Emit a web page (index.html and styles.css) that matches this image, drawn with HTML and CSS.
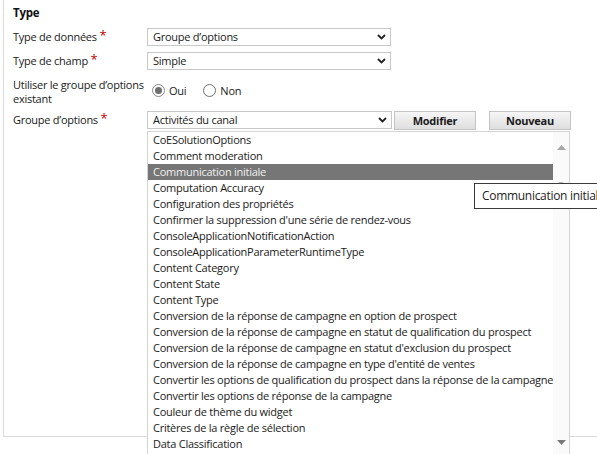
FILE: index.html
```html
<!DOCTYPE html>
<html lang="fr">
<head>
<meta charset="utf-8">
<title>Type</title>
<link rel="stylesheet" href="styles.css">
</head>
<body>
<div class="panel">
  <div class="title">Type</div>
  <div class="form">
    <div class="label">Type de données <span class="req">*</span></div>
    <div class="select"><span>Groupe d’options</span><svg class="chev" width="9" height="6" viewBox="0 0 9 6"><path d="M1 1 L4.5 4.5 L8 1" fill="none" stroke="#222" stroke-width="1.8"/></svg></div>

    <div class="label">Type de champ <span class="req">*</span></div>
    <div class="select"><span>Simple</span><svg class="chev" width="9" height="6" viewBox="0 0 9 6"><path d="M1 1 L4.5 4.5 L8 1" fill="none" stroke="#222" stroke-width="1.8"/></svg></div>

    <div class="label two">Utiliser le groupe d’options<br>existant</div>
    <div class="radios">
      <span class="radio on"><span class="dot"></span></span><span class="rlabel">Oui</span>
      <span class="radio"></span><span class="rlabel">Non</span>
    </div>

    <div class="label">Groupe d’options <span class="req">*</span></div>
    <div class="ctrlrow">
      <div class="select wide"><span>Activités du canal</span><svg class="chev" width="9" height="6" viewBox="0 0 9 6"><path d="M1 1 L4.5 4.5 L8 1" fill="none" stroke="#222" stroke-width="1.8"/></svg></div>
      <div class="btn">Modifier</div>
      <div class="btn">Nouveau</div>
    </div>

    <div></div>
    <div class="listbox">
      <ul class="items">
        <li>CoESolutionOptions</li>
        <li>Comment moderation</li>
        <li class="sel">Communication initiale</li>
        <li>Computation Accuracy</li>
        <li>Configuration des propriétés</li>
        <li>Confirmer la suppression d'une série de rendez-vous</li>
        <li>ConsoleApplicationNotificationAction</li>
        <li>ConsoleApplicationParameterRuntimeType</li>
        <li>Content Category</li>
        <li>Content State</li>
        <li>Content Type</li>
        <li>Conversion de la réponse de campagne en option de prospect</li>
        <li>Conversion de la réponse de campagne en statut de qualification du prospect</li>
        <li>Conversion de la réponse de campagne en statut d'exclusion du prospect</li>
        <li>Conversion de la réponse de campagne en type d'entité de ventes</li>
        <li>Convertir les options de qualification du prospect dans la réponse de la campagne</li>
        <li>Convertir les options de réponse de la campagne</li>
        <li>Couleur de thème du widget</li>
        <li>Critères de la règle de sélection</li>
        <li>Data Classification</li>
      </ul>
      <div class="scrollbar">
        <svg class="arrow" width="9" height="5" viewBox="0 0 9 5"><path d="M0 5 L4.5 0 L9 5 Z" fill="#a6a6a6"/></svg>
        <div class="thumbtop"></div>
        <svg class="arrow down" width="9" height="5" viewBox="0 0 9 5"><path d="M0 0 L4.5 5 L9 0 Z" fill="#7a7a7a"/></svg>
      </div>
    </div>
  </div>
</div>
<div class="tooltip">Communication initiale</div>
</body>
</html>
```
FILE: styles.css
```css
html, body {
  margin: 0;
  padding: 0;
  background: #ffffff;
  overflow: hidden;
  width: 597px;
  height: 454px;
}
body {
  font-family: "Open Sans", "Noto Sans", "Liberation Sans", sans-serif;
  font-size: 11px;
  letter-spacing: -0.25px;
  color: #1a1a1a;
  position: relative;
}
.panel {
  margin-left: 3px;
  width: 640px;
  height: 437px;
  border-left: 1px solid #dadada;
  border-bottom: 1px solid #dadada;
  box-sizing: border-box;
  padding-left: 9px;
}
.title {
  padding-top: 5px;
  height: 16px;
  line-height: 16px;
  font-weight: bold;
  font-size: 11.5px;
  color: #111;
}
.form {
  margin-top: 7px;
  display: grid;
  grid-template-columns: 134px 1fr;
  row-gap: 6px;
}
.label {
  line-height: 18px;
  height: 18px;
  white-space: nowrap;
}
.label.two {
  height: auto;
  line-height: 14px;
  padding-top: 2px;
  margin-bottom: -1px;
}
.req {
  color: #c00000;
  font-size: 13px;
  line-height: 0;
  position: relative;
  top: -1px;
}
.select {
  width: 244px;
  height: 18px;
  box-sizing: border-box;
  border: 1px solid #c8c8c8;
  display: flex;
  align-items: center;
  justify-content: space-between;
  padding: 0 4px 0 5px;
  line-height: 16px;
}
.select.wide {
  width: 245px;
}
.chev {
  display: block;
}
.radios {
  display: flex;
  align-items: center;
  height: 28px;
  padding-left: 5px;
  padding-top: 1px;
  box-sizing: border-box;
}
.radio {
  width: 13px;
  height: 13px;
  box-sizing: border-box;
  border: 1px solid #6f6f6f;
  border-radius: 50%;
  display: flex;
  align-items: center;
  justify-content: center;
  margin-right: 4px;
}
.radio.on {
  border-color: #8a8a8a;
}
.dot {
  width: 7px;
  height: 7px;
  border-radius: 50%;
  background: #6e6e6e;
}
.rlabel {
  margin-right: 17px;
}
.ctrlrow {
  display: flex;
  align-items: center;
  gap: 2px;
  height: 18px;
}
.btn {
  width: 82px;
  height: 19px;
  box-sizing: border-box;
  border: 1px solid #c4c4c4;
  background: linear-gradient(#f6f6f6, #dedede);
  font-weight: bold;
  text-align: center;
  line-height: 17px;
  color: #1a1a1a;
}
.btn + .btn {
  margin-left: 11px;
}
.listbox {
  margin-top: -4px;
  width: 423px;
  height: 340px;
  box-sizing: border-box;
  border: 1px solid #d4d4d4;
  background: #ffffff;
  display: flex;
}
.items {
  list-style: none;
  margin: 0;
  padding: 0;
  flex: 1;
  min-width: 0;
}
.items li {
  height: 16px;
  line-height: 16px;
  padding-left: 5px;
  white-space: nowrap;
  overflow: hidden;
}
.items li.sel {
  background: #767676;
  color: #f0f0f0;
}
.scrollbar {
  width: 16px;
  flex: none;
  background: #fafafa;
  display: flex;
  flex-direction: column;
  align-items: center;
}
.arrow {
  display: block;
  margin-top: 13px;
}
.thumbtop {
  margin-top: 32px;
  width: 8px;
  height: 4px;
  border-radius: 4px 4px 0 0;
  background: #b0b0b0;
}
.arrow.down {
  margin-top: 254px;
}
.tooltip {
  position: absolute;
  left: 474px;
  top: 183px;
  width: 200px;
  height: 26px;
  box-sizing: border-box;
  border: 1px solid #3a3a3a;
  background: #ffffff;
  padding-left: 7px;
  line-height: 24px;
  font-size: 12px;
  letter-spacing: -0.3px;
  color: #1e1e1e;
  white-space: nowrap;
}
```
